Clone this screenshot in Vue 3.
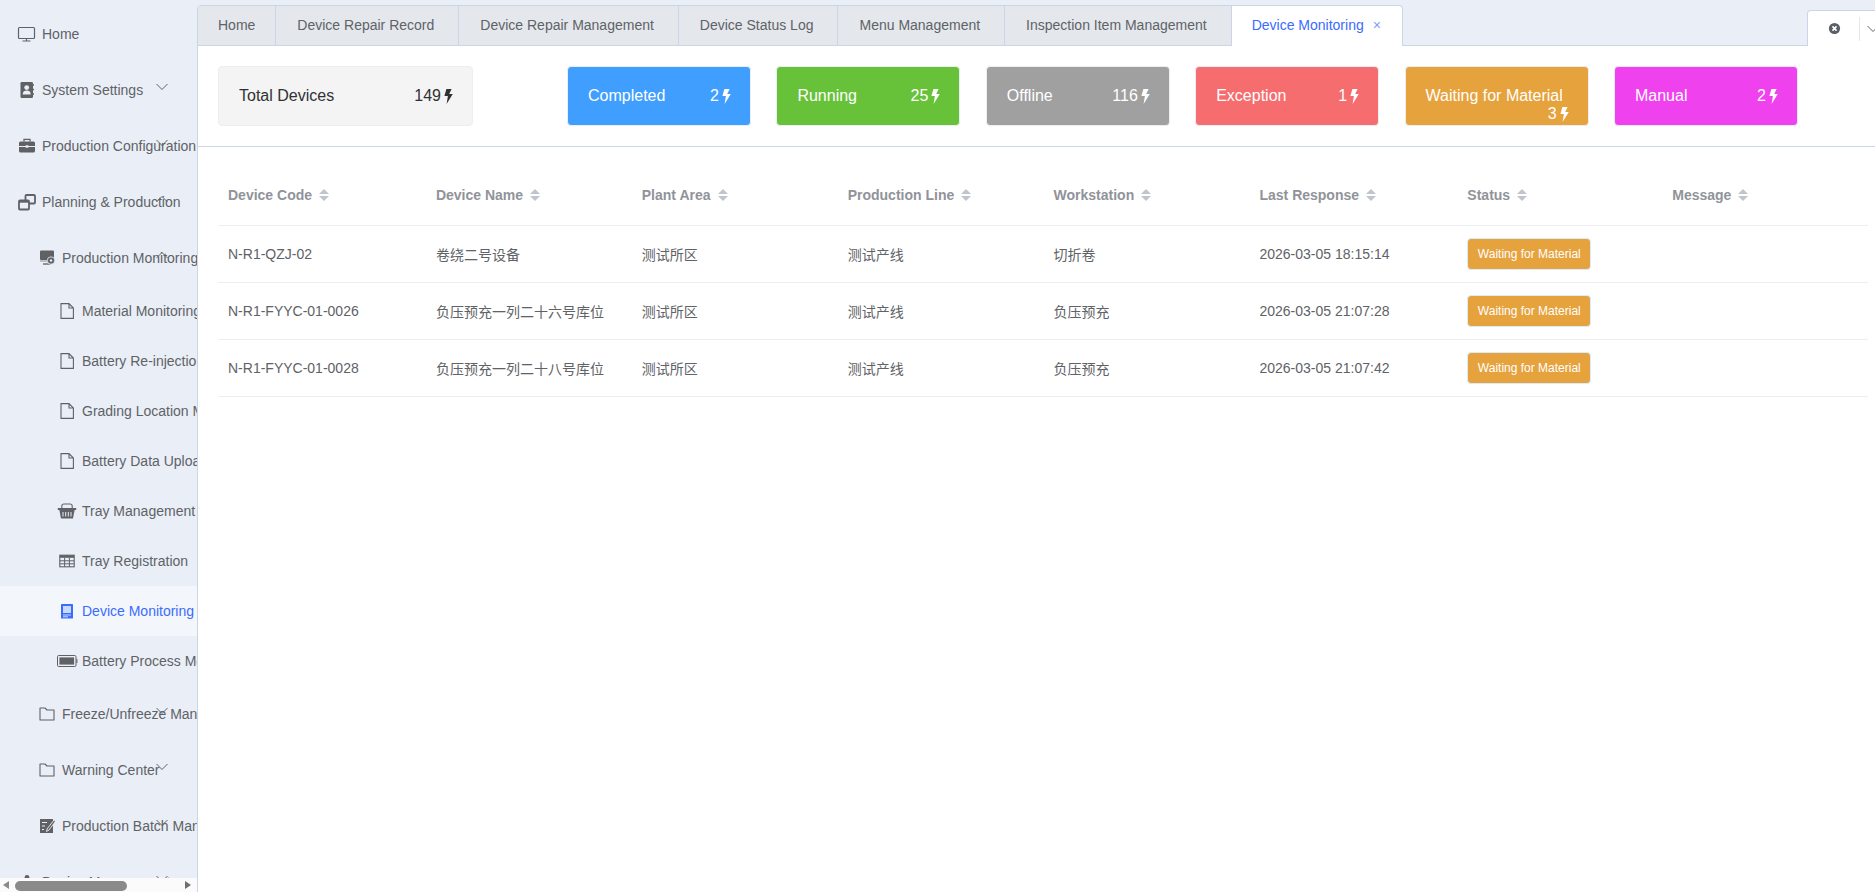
<template>
  <div class="layout">
    <aside class="sidebar">
      <div
        v-for="item in menu"
        :key="item.label"
        :class="['menu-row', 'level-' + item.level, { active: item.active }]"
      >
        <svg class="menu-icon" viewBox="0 0 20 20" v-html="icons[item.icon]"></svg>
        <span class="menu-label">{{ item.label }}</span>
        <svg v-if="item.arrow" class="menu-arrow" viewBox="0 0 12 6">
          <path :d="item.arrow === 'up' ? 'M0.5 6 L6 0.5 L11.5 6' : 'M0.5 0 L6 5.5 L11.5 0'" />
        </svg>
      </div>
      <div class="fake-scroll">
        <i class="scroll-left"></i>
        <i class="scroll-thumb"></i>
        <i class="scroll-right"></i>
      </div>
    </aside>

    <main class="main">
      <div class="tabbar">
        <div class="tabs">
          <div
            v-for="(tab, idx) in tabs"
            :key="tab"
            :class="['tab', { first: idx === 0, active: tab === activeTab }]"
          >
            {{ tab }}<span v-if="tab === activeTab" class="tab-close">×</span>
          </div>
        </div>
        <div class="tab-tools">
          <svg class="tool-close" viewBox="0 0 14 14">
            <circle cx="7" cy="7" r="6" fill="#5a5e66" />
            <path d="M4.8 4.8 L9.2 9.2 M9.2 4.8 L4.8 9.2" stroke="#fff" stroke-width="1.8" />
          </svg>
          <span class="tool-line"></span>
          <svg class="tool-arrow" viewBox="0 0 12 6">
            <path d="M0.5 0 L6 5.5 L11.5 0" />
          </svg>
        </div>
      </div>

      <section class="stats">
        <div class="stat-card total">
          <span>Total Devices</span>
          <span class="stat-value">149
            <svg class="bolt" viewBox="0 0 9 15"><path :d="boltPath" /></svg>
          </span>
        </div>
        <div class="stat-list">
          <div v-for="s in stats" :key="s.label" class="stat-card" :class="s.cls">
            <span>{{ s.label }}</span>
            <span class="stat-value">{{ s.value }}
              <svg class="bolt" viewBox="0 0 9 15"><path :d="boltPath" /></svg>
            </span>
          </div>
        </div>
      </section>

      <section class="table-wrap">
        <table class="device-table">
          <colgroup>
            <col v-for="n in 7" :key="n" class="data-col" />
            <col />
          </colgroup>
          <thead>
            <tr>
              <th v-for="col in columns" :key="col">
                <span class="th-inner">
                  {{ col }}
                  <span class="sort-caret"><i class="up"></i><i class="down"></i></span>
                </span>
              </th>
            </tr>
          </thead>
          <tbody>
            <tr v-for="row in rows" :key="row.code">
              <td>{{ row.code }}</td>
              <td>{{ row.name }}</td>
              <td>{{ row.area }}</td>
              <td>{{ row.line }}</td>
              <td>{{ row.station }}</td>
              <td>{{ row.time }}</td>
              <td><span class="status-tag">Waiting for Material</span></td>
              <td></td>
            </tr>
          </tbody>
        </table>
      </section>
    </main>
  </div>
</template>

<script setup>
const boltPath = 'M2.4 0 H7.6 L5.2 5 H8.8 L2.6 15 L3.9 7 H0.4 Z'

const page = '#eaeff7'
const dark = '#5f6165'
const file = `<path d="M4 2.6 H12 L16.4 7 V17.4 H4 Z M12 2.6 V7 H16.4" fill="none" stroke="${dark}" stroke-width="1.1"/>`
const folder = `<path d="M3 4 H8 L10 6 H17 V16 H3 Z" fill="none" stroke="${dark}" stroke-width="1.1" stroke-linejoin="round"/>`

const icons = {
  monitor: `<rect x="1.5" y="3.5" width="16" height="11" rx="1" fill="none" stroke="${dark}" stroke-width="1.2"/><path d="M9.5 14.5 V17 M5.5 17 H13.5" stroke="${dark}" stroke-width="1.1"/>`,
  book: `<rect x="3.5" y="2" width="12.5" height="16" rx="1.2" fill="${dark}"/><circle cx="9.7" cy="7.6" r="2.4" fill="${page}"/><path d="M5.7 14.5 C5.7 11.6 7.6 10.6 9.7 10.6 C11.8 10.6 13.7 11.6 13.7 14.5 Z" fill="${page}"/><path d="M16 5 H17 M16 9.5 H17 M16 14 H17" stroke="${dark}" stroke-width="1.4"/>`,
  briefcase: `<path d="M7 5.5 V3.4 H13 V5.5" fill="none" stroke="${dark}" stroke-width="1.3"/><rect x="2" y="5.5" width="16" height="11" rx="1.5" fill="${dark}"/><path d="M2 10.5 H18" stroke="${page}" stroke-width="1"/><rect x="8.6" y="9.3" width="2.8" height="2.4" fill="${page}"/>`,
  windows: `<rect x="8.5" y="3" width="9.5" height="8.5" rx="1" fill="none" stroke="${dark}" stroke-width="1.8"/><rect x="2" y="8.5" width="10" height="9" rx="1" fill="${page}" stroke="${dark}" stroke-width="1.8"/><path d="M2 9.5 H12" stroke="${dark}" stroke-width="2.4"/>`,
  server: `<rect x="3" y="2.5" width="14" height="9.5" rx="1" fill="${dark}"/><path d="M3 13 H13" stroke="#a9adb3" stroke-width="1.4"/><path d="M6 16 H13" stroke="${dark}" stroke-width="1.3"/><circle cx="14" cy="12.5" r="3.7" fill="${dark}" stroke="${page}" stroke-width="0.8"/><circle cx="14" cy="12.5" r="1.2" fill="${page}"/>`,
  file,
  basket: `<path d="M4.8 7 V5 Q4.8 3 7 3 H13 Q15.2 3 15.2 5 V7" fill="none" stroke="${dark}" stroke-width="1.1"/><rect x="0.8" y="7" width="18.4" height="2" fill="${dark}"/><path d="M2.4 9 H17.6 L16 17.4 H4 Z" fill="${dark}"/><path d="M6 11 V15.5 M8.7 11 V15.5 M11.3 11 V15.5 M14 11 V15.5" stroke="${page}" stroke-width="1"/>`,
  table: `<rect x="2.8" y="4.2" width="14.4" height="11.6" fill="none" stroke="${dark}" stroke-width="1.1"/><rect x="2.8" y="4.2" width="14.4" height="2.6" fill="${dark}"/><path d="M2.8 9.8 H17.2 M2.8 12.8 H17.2 M7.6 6.8 V15.8 M12.4 6.8 V15.8" stroke="${dark}" stroke-width="1"/>`,
  device: `<rect x="4" y="3" width="12" height="14.6" rx="0.6" fill="#3a6cff"/><rect x="6" y="5" width="8" height="7" fill="#c9d8ff"/><path d="M6 14 H14 M6 15.8 H11" stroke="#dce6ff" stroke-width="0.9"/>`,
  battery: `<rect x="0.5" y="4.5" width="18.5" height="11" rx="1.2" fill="none" stroke="${dark}" stroke-width="1"/><rect x="2.4" y="6.4" width="14.7" height="7.2" fill="${dark}"/><rect x="19.4" y="8" width="1" height="4" fill="${dark}"/>`,
  folder,
  edit: `<rect x="3" y="3" width="13" height="14" fill="${dark}"/><path d="M5 6.5 H10 M5 10 H8 M5 13.5 H7" stroke="${page}" stroke-width="1"/><path d="M17 4 L10 13 L9.5 15.5 L12 14 L18 6" fill="${dark}" stroke="${page}" stroke-width="0.9"/>`,
  user: `<circle cx="10" cy="5.5" r="2.4" fill="${dark}"/><path d="M5.5 17 C5.5 11 7.5 9 10 9 C12.5 9 14.5 11 14.5 17 Z" fill="${dark}"/>`
}

const menu = [
  { label: 'Home', level: 1, icon: 'monitor' },
  { label: 'System Settings', level: 1, icon: 'book', arrow: 'down' },
  { label: 'Production Configuration', level: 1, icon: 'briefcase', arrow: 'down' },
  { label: 'Planning & Production', level: 1, icon: 'windows', arrow: 'up' },
  { label: 'Production Monitoring', level: 2, icon: 'server', arrow: 'up' },
  { label: 'Material Monitoring', level: 3, icon: 'file' },
  { label: 'Battery Re-injection', level: 3, icon: 'file' },
  { label: 'Grading Location Management', level: 3, icon: 'file' },
  { label: 'Battery Data Upload', level: 3, icon: 'file' },
  { label: 'Tray Management', level: 3, icon: 'basket' },
  { label: 'Tray Registration', level: 3, icon: 'table' },
  { label: 'Device Monitoring', level: 3, icon: 'device', active: true },
  { label: 'Battery Process Monitoring', level: 3, icon: 'battery' },
  { label: 'Freeze/Unfreeze Management', level: 2, icon: 'folder', arrow: 'down' },
  { label: 'Warning Center', level: 2, icon: 'folder', arrow: 'down' },
  { label: 'Production Batch Management', level: 2, icon: 'edit', arrow: 'down' },
  { label: 'Device Management', level: 1, icon: 'user', arrow: 'down' }
]

const tabs = [
  'Home',
  'Device Repair Record',
  'Device Repair Management',
  'Device Status Log',
  'Menu Management',
  'Inspection Item Management',
  'Device Monitoring'
]
const activeTab = 'Device Monitoring'

const stats = [
  { label: 'Completed', value: 2, cls: 'blue' },
  { label: 'Running', value: 25, cls: 'green' },
  { label: 'Offline', value: 116, cls: 'grey' },
  { label: 'Exception', value: 1, cls: 'red' },
  { label: 'Waiting for Material', value: 3, cls: 'orange' },
  { label: 'Manual', value: 2, cls: 'pink' }
]

const columns = [
  'Device Code',
  'Device Name',
  'Plant Area',
  'Production Line',
  'Workstation',
  'Last Response',
  'Status',
  'Message'
]

const rows = [
  { code: 'N-R1-QZJ-02', name: '卷绕二号设备', area: '测试所区', line: '测试产线', station: '切折卷', time: '2026-03-05 18:15:14' },
  { code: 'N-R1-FYYC-01-0026', name: '负压预充一列二十六号库位', area: '测试所区', line: '测试产线', station: '负压预充', time: '2026-03-05 21:07:28' },
  { code: 'N-R1-FYYC-01-0028', name: '负压预充一列二十八号库位', area: '测试所区', line: '测试产线', station: '负压预充', time: '2026-03-05 21:07:42' }
]
</script>

<style>
html,
body {
  margin: 0;
  height: 100%;
  overflow: hidden;
  background: #eaeff7;
}
</style>

<style scoped>
.layout {
  display: flex;
  height: 892px;
  background: #eaeff7;
  font-family: 'Liberation Sans', 'Noto Sans CJK SC', sans-serif;
  font-size: 14px;
  color: #606266;
  overflow: hidden;
}

.sidebar {
  position: relative;
  flex: 0 0 197px;
  width: 197px;
  height: 892px;
  padding-top: 6px;
  box-sizing: border-box;
  overflow: hidden;
}

.menu-row {
  position: relative;
  display: flex;
  align-items: center;
  gap: 5px;
  width: 197px;
  box-sizing: border-box;
  white-space: nowrap;
  color: #606266;
}

.level-1 {
  height: 56px;
  padding-left: 17px;
}

.level-2 {
  height: 56px;
  padding-left: 37px;
}

.level-3 {
  height: 50px;
  padding-left: 57px;
}

.menu-row.active {
  background: #f3f7fb;
  color: #3a6cff;
}

.menu-icon {
  flex: 0 0 20px;
  width: 20px;
  height: 20px;
  overflow: visible;
}

.menu-arrow {
  position: absolute;
  left: 156px;
  top: 50%;
  width: 12px;
  height: 6px;
  margin-top: -6px;
  overflow: visible;
}

.menu-arrow path {
  fill: none;
  stroke: #606266;
  stroke-width: 1;
}

.fake-scroll {
  position: absolute;
  left: 0;
  right: 0;
  bottom: 0;
  height: 14px;
  background: #fbfbfb;
}

.scroll-thumb {
  position: absolute;
  left: 15px;
  top: 3px;
  width: 112px;
  height: 10px;
  border-radius: 5px;
  background: #8a8a8a;
}

.scroll-left,
.scroll-right {
  position: absolute;
  top: 3px;
  width: 0;
  height: 0;
  border-top: 4px solid transparent;
  border-bottom: 4px solid transparent;
}

.scroll-left {
  left: 3px;
  border-right: 6px solid #8a8a8a;
}

.scroll-right {
  left: 185px;
  border-left: 6px solid #6f6f6f;
}

.main {
  flex: 1;
  min-width: 0;
  margin-top: 5px;
  border-left: 1px solid #ccd5e5;
  border-top-left-radius: 4px;
  background: #fff;
  overflow: hidden;
}

.tabbar {
  display: flex;
  align-items: flex-end;
  height: 41px;
  box-sizing: border-box;
  background: #eaeff7;
  border-bottom: 1px solid #ccd5e5;
}

.tabs {
  display: flex;
  height: 40px;
}

.tab {
  height: 40px;
  box-sizing: border-box;
  padding: 0 24px 0 21px;
  border-left: 1px solid #ccd5e5;
  border-top: 1px solid #ccd5e5;
  background: #e4e8ed;
  line-height: 39px;
  white-space: nowrap;
  color: #606266;
}

.tab.first {
  padding: 0 20px;
  border-left: none;
  border-top-left-radius: 4px;
}

.tab.active {
  height: 41px;
  margin-bottom: -1px;
  padding: 0 21px 0 20px;
  background: #fff;
  color: #3a6cff;
  border-right: 1px solid #ccd5e5;
  border-top-right-radius: 4px;
}

.tab-close {
  margin-left: 9px;
  font-size: 14px;
  color: #7f9dff;
}

.tab-tools {
  display: flex;
  align-items: center;
  flex-shrink: 0;
  width: 80px;
  height: 36px;
  margin-left: auto;
  margin-right: -12px;
  margin-bottom: -1px;
  box-sizing: border-box;
  padding-left: 20px;
  background: #fff;
  border: 1px solid #ccd5e5;
  border-bottom: none;
  border-top-left-radius: 4px;
}

.tool-close {
  width: 13px;
  height: 13px;
}

.tool-line {
  width: 1px;
  height: 24px;
  margin-left: 18px;
  background: #e4e7ed;
}

.tool-arrow {
  width: 12px;
  height: 6px;
  margin-left: 7px;
}

.tool-arrow path {
  fill: none;
  stroke: #606266;
}

.stats {
  display: flex;
  padding: 20px;
  border-bottom: 1px solid #ccd5e5;
}

.stat-card {
  display: flex;
  flex-wrap: wrap;
  justify-content: space-between;
  align-content: flex-start;
  width: 184px;
  height: 60px;
  box-sizing: border-box;
  padding: 20px 19px 0 20px;
  border: 1px solid #ebeef5;
  border-radius: 4px;
  font-size: 16px;
  color: #fff;
}

.stat-card.total {
  width: 255px;
  background: #f4f4f5;
  color: #303133;
}

.stat-list {
  display: flex;
  gap: 25.4px;
  margin-left: 94px;
}

.stat-value {
  display: inline-flex;
  align-items: center;
  margin-left: auto;
}

.bolt {
  width: 9px;
  height: 15px;
  margin-left: 3px;
  fill: currentColor;
}

.blue {
  background: #409eff;
}

.green {
  background: #67c23a;
}

.grey {
  background: #a0a0a0;
}

.red {
  background: #f66d70;
}

.orange {
  background: #e6a23c;
}

.pink {
  background: #f041ef;
}

.table-wrap {
  padding: 18px 7px 0 20px;
}

.device-table {
  width: 1650px;
  table-layout: fixed;
  border-collapse: collapse;
}

.data-col {
  width: 205.9px;
}

.device-table th,
.device-table td {
  padding: 0 0 0 12px;
  border-bottom: 1px solid #ebeef5;
  text-align: left;
  white-space: nowrap;
}

.device-table th:first-child,
.device-table td:first-child {
  padding-left: 10px;
}

.device-table th:nth-child(7),
.device-table td:nth-child(7) {
  padding-left: 14px;
}

.device-table th:nth-child(8),
.device-table td:nth-child(8) {
  padding-left: 13px;
}

.device-table th {
  height: 60px;
  font-weight: 700;
  color: #909399;
}

.device-table td {
  height: 56px;
  color: #606266;
}

.th-inner {
  display: inline-flex;
  align-items: center;
  gap: 7px;
}

.sort-caret {
  display: inline-flex;
  flex-direction: column;
  gap: 2px;
}

.sort-caret i {
  width: 0;
  height: 0;
  border-left: 5px solid transparent;
  border-right: 5px solid transparent;
}

.sort-caret .up {
  border-bottom: 5px solid #c0c4cc;
}

.sort-caret .down {
  border-top: 5px solid #c0c4cc;
}

.status-tag {
  display: inline-block;
  height: 32px;
  box-sizing: border-box;
  padding: 0 9.5px;
  border: 1px solid #d9ecff;
  border-radius: 4px;
  background: #e6a23c;
  font-size: 12px;
  line-height: 30px;
  color: #fff;
}
</style>
